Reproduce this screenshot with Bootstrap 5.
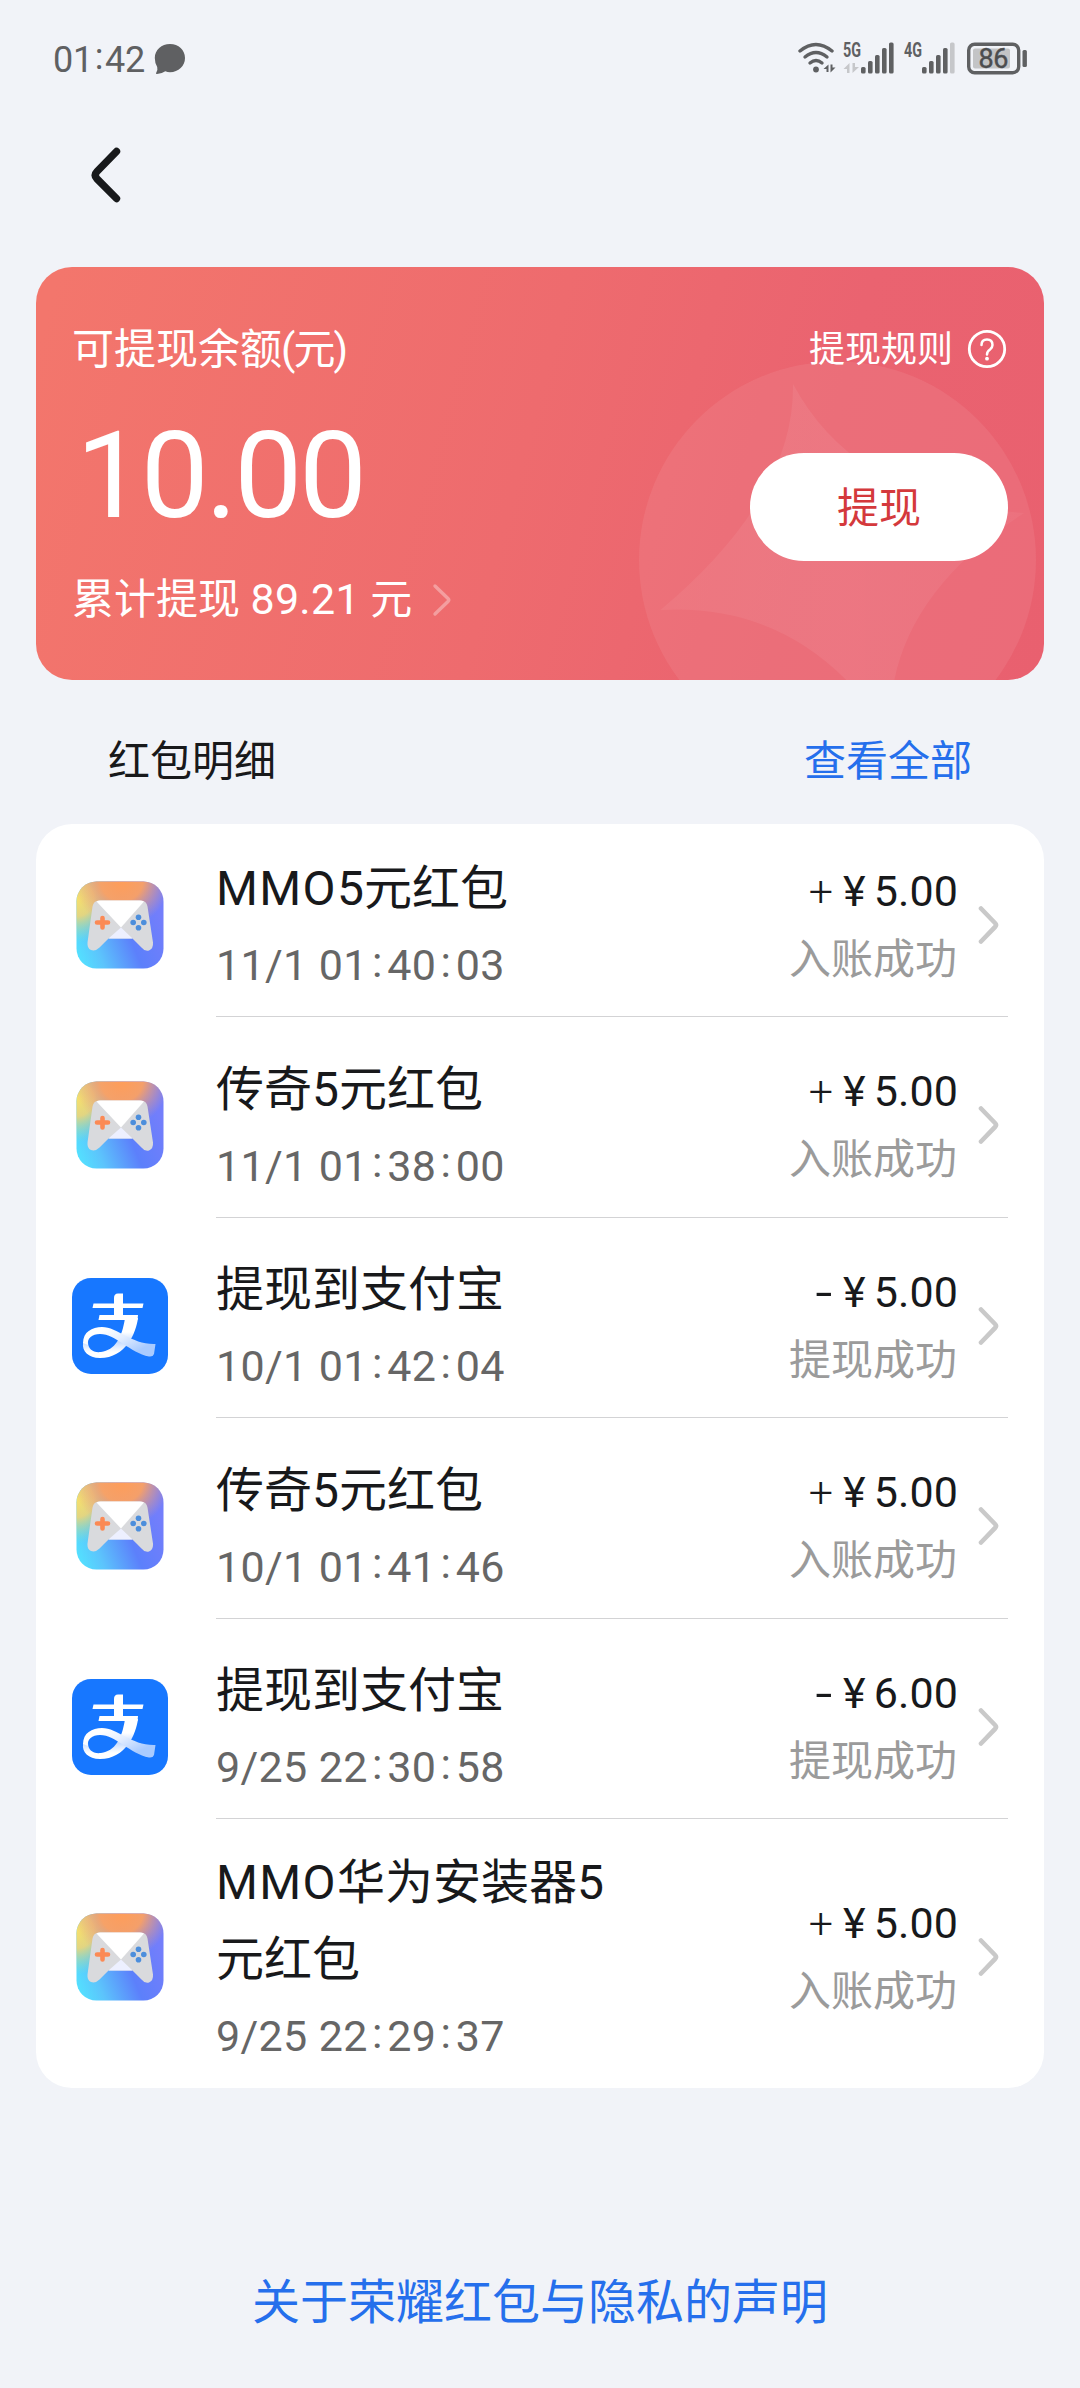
<!DOCTYPE html>
<html lang="zh-CN">
<head>
<meta charset="utf-8">
<meta name="viewport" content="width=device-width, initial-scale=1">
<title>红包</title>
<link href="https://cdn.jsdelivr.net/npm/bootstrap@5.3.0/dist/css/bootstrap.min.css" rel="stylesheet">
<style>
body{background:#f1f3f8;color:#18191b;font-family:Roboto,"Noto Sans CJK SC",sans-serif;font-size:42px;line-height:1}
.screen{width:1080px;height:2388px;overflow:hidden}
svg{display:block;flex:none}
a{text-decoration:none}
.statusbar{height:118px;padding:0 50px 0 53px;color:#5f6062}
.clock{font-size:36px;letter-spacing:-.2px;width:101px;white-space:nowrap;padding-top:2px}
.cl{display:inline-block;text-align:center;position:relative;top:-.08em}
.clock .cl{width:12px}
.topbar{height:149px;padding:29px 92px 0 91px}
.balance{height:413px;margin:0 36px;border-radius:36px;background:linear-gradient(105deg,#f3766c 2%,#ee6b6e 48%,#ea6370 75%,#e9606f 100%);color:#fff;padding:0 36px;position:relative;overflow:hidden}
.deco{position:absolute;left:0;top:0}
.balance-body{position:relative;height:100%}
.col-left{padding-top:62px}
.bal-label{line-height:42px}
.bal-label span{letter-spacing:-2px;margin-left:-1px}
.bal-num{font-size:121px;letter-spacing:-3.2px;line-height:120px;margin-top:45px;margin-left:4px}
.bal-total{line-height:42px;margin-top:42px}
.bal-total .num{font-size:43px;letter-spacing:.3px}
.more{margin-left:20px}
.col-right{padding-top:62px}
.rules{font-size:36px;height:42px;gap:14px;margin-right:-1px}
.rules svg{position:relative;top:-1px}
.btn-draw{width:258px;height:108px;border-radius:54px;background:#fff;color:#d4393c;font-size:42px;line-height:42px;margin-top:82px;padding:3px 0 0;border:0}
.sect{height:144px;padding:19px 108px 0}
.blue{color:#256fec}
.records{margin:0 36px;background:#fff;border-radius:36px;padding-left:36px;height:1264px}
.rec{height:200px;padding-top:15px}
.rec-tall{height:201px}
.rec-first{height:193px;padding-top:8px}
.rec-last{height:269px;padding-top:7px}
.ico{width:96px;margin-right:48px}
.rec-main{margin-right:36px;position:relative}
.ruled::after{content:"";position:absolute;left:0;right:0;bottom:0;height:1px;background:#d3d3d5}
.ttl{font-size:48px;line-height:77px}
.lat{letter-spacing:1.4px}
.time{font-size:43px;letter-spacing:.35px;line-height:77px;color:#666}
.time .cl{width:19.500px}
.txt{padding-top:5px}
.amt{font-size:43px;line-height:66px;letter-spacing:.1px;white-space:nowrap}
.state{font-size:42px;line-height:66px;color:#9b9b9b;position:relative;top:2px;left:-2px}
.amt{position:relative;top:-1px;left:-1px}
.yen{margin:0 8px 0 10px}
.sign{display:inline-block;font-weight:300}
.minus{transform:scaleX(1.400);margin-right:3px;font-weight:400}
.chev{margin-left:19px;margin-right:9px}
.foot{font-size:48px;margin-top:191px}
</style>
<script src="https://cdn.jsdelivr.net/npm/bootstrap@5.3.0/dist/js/bootstrap.bundle.min.js"></script>
</head>
<body>
<svg width="0" height="0" class="position-absolute">
  <defs>
    <linearGradient id="gBase" x1="0" y1=".9" x2="1" y2=".5"><stop offset="0" stop-color="#52e4ff"/><stop offset=".25" stop-color="#5cc4fc"/><stop offset=".62" stop-color="#5c80fb"/><stop offset="1" stop-color="#737efb"/></linearGradient>
    <radialGradient id="gOrange" cx=".52" cy="-.02" r=".55"><stop offset="0" stop-color="#ff9d58"/><stop offset=".45" stop-color="#fba163" stop-opacity=".95"/><stop offset="1" stop-color="#e79b8a" stop-opacity="0"/></radialGradient>
    <radialGradient id="gYellow" cx="0" cy=".2" r=".5"><stop offset="0" stop-color="#f5e06c"/><stop offset=".4" stop-color="#f1d774" stop-opacity=".9"/><stop offset="1" stop-color="#8fe6b5" stop-opacity="0"/></radialGradient>
    <linearGradient id="gTail" x1=".35" y1="0" x2="1" y2=".5"><stop offset="0" stop-color="#fff"/><stop offset=".45" stop-color="#e4eeff"/><stop offset="1" stop-color="#a9cbff"/></linearGradient>
    <linearGradient id="gLeg" x1="0" y1="0" x2="0" y2="1"><stop offset="0" stop-color="#fff"/><stop offset=".35" stop-color="#fff"/><stop offset=".6" stop-color="#c6dcff"/><stop offset=".85" stop-color="#fff"/></linearGradient>
  </defs>
  <symbol id="game" viewBox="0 0 96 96">
    <g transform="translate(4.5 4.5)">
      <rect width="87" height="87" rx="20" fill="url(#gBase)"/>
      <rect width="87" height="87" rx="20" fill="url(#gYellow)"/>
      <rect width="87" height="87" rx="20" fill="url(#gOrange)"/>
      <path d="M23 19H64Q70 19 71 25L76.500 61Q77 67 72.500 69Q68 70 65 66L56 57H32L23 66Q19 70 14.500 68.500Q10.500 67 11 61L16 25Q17 19 23 19Z" fill="#d9dadd"/>
      <path d="M20 20Q21 19 24 19H63Q66 19 67.500 20L44.500 46Z" fill="#fff"/>
      <path d="M44.500 46L56 57H32Z" fill="#edf0ff"/>
      <path d="M26 36.500V46M20.500 41H31.500" stroke="#fb8a55" stroke-width="4.600" stroke-linecap="round"/>
      <g fill="#4c8edc"><circle cx="62" cy="35.700" r="2.800"/><circle cx="62" cy="46.300" r="2.800"/><circle cx="56.700" cy="41" r="2.800"/><circle cx="67.300" cy="41" r="2.800"/></g>
    </g>
  </symbol>
  <symbol id="pay" viewBox="0 0 96 96">
    <rect width="96" height="96" rx="19" fill="#1777ff"/>
    <path d="M53 40H66C64 55 54 80 28 80C16 80 10 73 11 65L16 64C16 71 21 75 29 74C43 72 50 60 53 40Z" fill="url(#gLeg)"/>
    <path d="M21.500 25.500H42V20Q42 15.500 46 15.500H51V25.500H71.500L70.500 30H51V37H66L65.500 42H26.500L27.500 37H42V30H20.500Z" fill="#fff"/>
    <path d="M11 65C11 54 20 49 30 49C46 49 60 67 83.500 66L82 76Q81 79 77 78.500C58 75 44 56 28 56C20 56 15 60 16 67Z" fill="url(#gTail)"/>
  </symbol>
  <symbol id="next" viewBox="0 0 21 40"><path d="M3 3.500L17 18Q19 20 17 22L3 36.500" fill="none" stroke="#c9c9c9" stroke-width="4.600" stroke-linecap="round"/></symbol>
</svg>

<div class="screen d-flex flex-column">
  <header class="statusbar d-flex align-items-center justify-content-between flex-shrink-0">
    <div class="d-flex align-items-center">
      <span class="clock">01<span class="cl">:</span>42</span>
      <svg width="32" height="32" viewBox="0 0 32 32" fill="#5f6062"><path d="M16 1C24.500 1 31 7 31 15S24.500 29.200 16 29.200Q13.500 29.200 11.300 28.300Q7.500 31 3 31Q1.300 31 2.300 29.500Q4 27.500 3.200 24Q.8 20 .8 15C.8 7 7.500 1 16 1Z"/></svg>
    </div>
    <svg width="232" height="40" viewBox="799 40 232 40" fill="#5f6062" font-family="Roboto,sans-serif">
      <g fill="none" stroke="#5f6062" stroke-width="3.400" stroke-linecap="round"><path d="M801 52Q816.800 39 833 52"/><path d="M806 58Q817 49 828 58"/><path d="M811 64Q817 59 823 64"/></g>
      <circle cx="817" cy="70.500" r="2.900"/>
      <path d="M824.500 70L829.500 65.500V73H827.500V70ZM831.500 65.500H833.500V68.500H836.500L831.500 73.500Z"/>
      <text x="844" y="57.500" font-size="19.500" font-weight="700" textLength="18" lengthAdjust="spacingAndGlyphs">5G</text>
      <path d="M844.500 70L850.500 64V74H848V70ZM853.500 64H856V68H860L853.500 74Z" fill="#c6c7ca"/>
      <rect x="862" y="68" width="4.600" height="6.500" rx="1.600"/><rect x="869" y="62" width="4.600" height="12.500" rx="1.600"/><rect x="876" y="56" width="4.600" height="18.500" rx="1.600"/><rect x="883" y="49" width="4.600" height="25.500" rx="1.600"/><rect x="890" y="43.500" width="4.600" height="31" rx="1.600"/>
      <text x="905" y="57.500" font-size="19.500" font-weight="700" textLength="18" lengthAdjust="spacingAndGlyphs">4G</text>
      <rect x="923" y="68" width="4.600" height="6.500" rx="1.600"/><rect x="930" y="62" width="4.600" height="12.500" rx="1.600"/><rect x="937" y="56" width="4.600" height="18.500" rx="1.600"/><rect x="944" y="49" width="4.600" height="25.500" rx="1.600"/><rect x="951" y="43.500" width="4.600" height="31" rx="1.600" fill="#c6c7ca"/>
      <rect x="969.700" y="45.200" width="50" height="28.500" rx="6" fill="none" stroke="#5f6062" stroke-width="3.400"/>
      <rect x="974" y="49.500" width="37" height="20" rx="2" fill="#c3c4c6"/>
      <rect x="1023.500" y="51" width="4.400" height="17" rx="1.500"/>
      <text x="979.500" y="69" font-size="27" font-weight="400" fill="#4c4d4f" stroke="#4c4d4f" stroke-width=".4" textLength="30">86</text>
    </svg>
  </header>

  <nav class="topbar flex-shrink-0">
    <svg width="30" height="56" viewBox="0 0 30 56"><path d="M25.500 4.500L6 24.500Q2.500 28.200 6 31.800L25.500 51.500" fill="none" stroke="#18191b" stroke-width="7.400" stroke-linecap="round"/></svg>
  </nav>

  <section class="balance flex-shrink-0">
    <svg class="deco" width="1008" height="413" viewBox="0 0 1008 413">
      <defs><linearGradient id="gStar" x1="0" y1=".5" x2="1" y2=".5"><stop offset="0" stop-color="#fff" stop-opacity=".05"/><stop offset=".5" stop-color="#ffdfe8" stop-opacity=".08"/><stop offset="1" stop-color="#fff" stop-opacity=".04"/></linearGradient></defs>
      <circle cx="801.500" cy="293" r="198.500" fill="#ffd9dd" fill-opacity=".09"/>
      <path d="M757 117Q759 230 624.500 343Q770 335 855 470Q845 340 988 246Q820 235 757 117Z" fill="url(#gStar)"/>
    </svg>
    <div class="balance-body d-flex justify-content-between">
      <div class="col-left">
        <div class="bal-label">可提现余额<span>(元)</span></div>
        <div class="bal-num">10.00</div>
        <div class="bal-total d-flex align-items-center"><span>累计提现 <span class="num">89.21</span> 元</span>
          <svg class="more" width="20" height="34" viewBox="0 0 20 34"><path d="M3 3L16 15.500Q17.500 17 16 18.500L3 31" fill="none" stroke="#fff" stroke-opacity=".34" stroke-width="3.400" stroke-linecap="round"/></svg>
        </div>
      </div>
      <div class="col-right d-flex flex-column align-items-end">
        <div class="rules d-flex align-items-center"><span>提现规则</span>
          <svg width="42" height="42" viewBox="0 0 42 42" fill="none" stroke="#fff" stroke-width="2.800"><circle cx="20" cy="21" r="17.700"/><path d="M14.500 17Q14.500 11.500 20 11.500T25.500 17Q25.500 19.500 23 21.500Q20 23.500 20 26.500" stroke-linecap="round" stroke-width="2.500"/><circle cx="20" cy="30.700" r="1.900" fill="#fff" stroke="none"/></svg>
        </div>
        <button class="btn btn-draw" type="button">提现</button>
      </div>
    </div>
  </section>

  <div class="sect d-flex justify-content-between align-items-center flex-shrink-0">
    <span>红包明细</span><a class="blue" href="#">查看全部</a>
  </div>

  <main class="records flex-shrink-0">
    <div class="rec rec-first d-flex">
      <div class="ico d-flex align-items-center"><svg width="96" height="96"><use href="#game"/></svg></div>
      <div class="rec-main ruled flex-grow-1 d-flex align-items-center justify-content-between">
        <div class="txt"><div class="ttl"><span class="lat">MMO</span>5元红包</div><div class="time">11/1 01<span class="cl">:</span>40<span class="cl">:</span>03</div></div>
        <div class="d-flex align-items-center"><div class="text-end"><div class="amt"><span class="sign">+</span><span class="yen">¥</span>5.00</div><div class="state">入账成功</div></div><svg class="chev" width="21" height="40"><use href="#next"/></svg></div>
      </div>
    </div>
    <div class="rec rec-tall d-flex">
      <div class="ico d-flex align-items-center"><svg width="96" height="96"><use href="#game"/></svg></div>
      <div class="rec-main ruled flex-grow-1 d-flex align-items-center justify-content-between">
        <div class="txt"><div class="ttl">传奇5元红包</div><div class="time">11/1 01<span class="cl">:</span>38<span class="cl">:</span>00</div></div>
        <div class="d-flex align-items-center"><div class="text-end"><div class="amt"><span class="sign">+</span><span class="yen">¥</span>5.00</div><div class="state">入账成功</div></div><svg class="chev" width="21" height="40"><use href="#next"/></svg></div>
      </div>
    </div>
    <div class="rec d-flex">
      <div class="ico d-flex align-items-center"><svg width="96" height="96"><use href="#pay"/></svg></div>
      <div class="rec-main ruled flex-grow-1 d-flex align-items-center justify-content-between">
        <div class="txt"><div class="ttl">提现到支付宝</div><div class="time">10/1 01<span class="cl">:</span>42<span class="cl">:</span>04</div></div>
        <div class="d-flex align-items-center"><div class="text-end"><div class="amt"><span class="sign minus">-</span><span class="yen">¥</span>5.00</div><div class="state">提现成功</div></div><svg class="chev" width="21" height="40"><use href="#next"/></svg></div>
      </div>
    </div>
    <div class="rec rec-tall d-flex">
      <div class="ico d-flex align-items-center"><svg width="96" height="96"><use href="#game"/></svg></div>
      <div class="rec-main ruled flex-grow-1 d-flex align-items-center justify-content-between">
        <div class="txt"><div class="ttl">传奇5元红包</div><div class="time">10/1 01<span class="cl">:</span>41<span class="cl">:</span>46</div></div>
        <div class="d-flex align-items-center"><div class="text-end"><div class="amt"><span class="sign">+</span><span class="yen">¥</span>5.00</div><div class="state">入账成功</div></div><svg class="chev" width="21" height="40"><use href="#next"/></svg></div>
      </div>
    </div>
    <div class="rec d-flex">
      <div class="ico d-flex align-items-center"><svg width="96" height="96"><use href="#pay"/></svg></div>
      <div class="rec-main ruled flex-grow-1 d-flex align-items-center justify-content-between">
        <div class="txt"><div class="ttl">提现到支付宝</div><div class="time">9/25 22<span class="cl">:</span>30<span class="cl">:</span>58</div></div>
        <div class="d-flex align-items-center"><div class="text-end"><div class="amt"><span class="sign minus">-</span><span class="yen">¥</span>6.00</div><div class="state">提现成功</div></div><svg class="chev" width="21" height="40"><use href="#next"/></svg></div>
      </div>
    </div>
    <div class="rec rec-last d-flex">
      <div class="ico d-flex align-items-center"><svg width="96" height="96"><use href="#game"/></svg></div>
      <div class="rec-main flex-grow-1 d-flex align-items-center justify-content-between">
        <div class="txt"><div class="ttl"><span class="lat">MMO</span>华为安装器5<br>元红包</div><div class="time">9/25 22<span class="cl">:</span>29<span class="cl">:</span>37</div></div>
        <div class="d-flex align-items-center"><div class="text-end"><div class="amt"><span class="sign">+</span><span class="yen">¥</span>5.00</div><div class="state">入账成功</div></div><svg class="chev" width="21" height="40"><use href="#next"/></svg></div>
      </div>
    </div>
  </main>

  <footer class="foot text-center"><a class="blue" href="#">关于荣耀红包与隐私的声明</a></footer>
</div>
</body>
</html>
